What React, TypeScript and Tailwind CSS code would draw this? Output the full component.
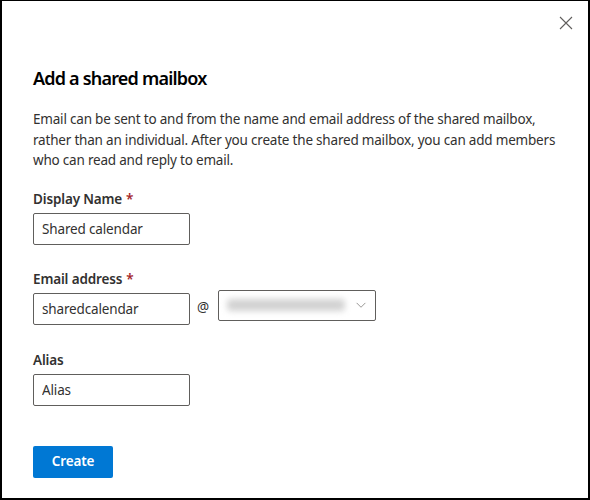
import React from 'react';

const Label: React.FC<{ text: string; required?: boolean }> = ({ text, required }) => (
  <label className="block text-[13.5px] leading-[20px] tracking-[-0.15px] font-semibold text-[#323130] mb-[4px]">
    {text}
    {required && <span className="text-[#a4262c] ml-[4px]">*</span>}
  </label>
);

const TextBox: React.FC<{ value: string }> = ({ value }) => (
  <input
    readOnly
    value={value}
    className="w-[157px] h-[32px] border border-[#605e5c] rounded-[2px] px-[8px] text-[13.5px] tracking-[-0.15px] text-[#323130] outline-none bg-white"
  />
);

export default function App() {
  return (
    <div
      className="w-[590px] h-[500px] bg-white border-t border-l-2 border-r-2 border-b-2 border-black relative"
      style={{ fontFamily: '"Segoe UI", "Noto Sans", sans-serif' }}
    >
      <button className="absolute right-[15px] top-[15px] w-[14px] h-[14px] text-[#605e5c]" aria-label="Close">
        <svg viewBox="0 0 14 14" className="w-[14px] h-[14px]">
          <path d="M1 1 L13 13 M13 1 L1 13" stroke="currentColor" strokeWidth="1.1" fill="none" />
        </svg>
      </button>

      <div className="pl-[31px] pt-[63px]">
        <h1 className="text-[18px] leading-[28px] tracking-[-0.8px] font-semibold text-[#000]">Add a shared mailbox</h1>
        <p className="mt-[17px] text-[13.5px] leading-[20.5px] tracking-[-0.2px] text-[#323130]">
          Email can be sent to and from the name and email address of the shared mailbox,
          <br />
          rather than an individual. After you create the shared mailbox, you can add members
          <br />
          who can read and reply to email.
        </p>

        <div className="mt-[18px]">
          <Label text="Display Name" required />
          <TextBox value="Shared calendar" />
        </div>

        <div className="mt-[24px]">
          <Label text="Email address" required />
          <div className="flex items-start">
            <TextBox value="sharedcalendar" />
            <span className="ml-[7px] mt-[4px] text-[13.5px] text-[#323130]">@</span>
            <div className="ml-[9px] -mt-[3px] w-[158px] h-[31px] border border-[#605e5c] rounded-[2px] flex items-center justify-between pl-[8px] pr-[8px] overflow-hidden">
              <div className="w-[118px] h-[12px] bg-[#d2d2d2] blur-[3px] rounded-sm" />
              <svg viewBox="0 0 12 8" className="w-[12px] h-[7px] text-[#8a8886]">
                <path d="M1 1 L6 6 L11 1" stroke="currentColor" strokeWidth="1" fill="none" />
              </svg>
            </div>
          </div>
        </div>

        <div className="mt-[25px]">
          <Label text="Alias" />
          <TextBox value="Alias" />
        </div>

        <button className="mt-[40px] w-[80px] h-[32px] bg-[#0078d4] rounded-[2px] text-white text-[13.5px] tracking-[-0.15px] font-semibold">
          Create
        </button>
      </div>
    </div>
  );
}
